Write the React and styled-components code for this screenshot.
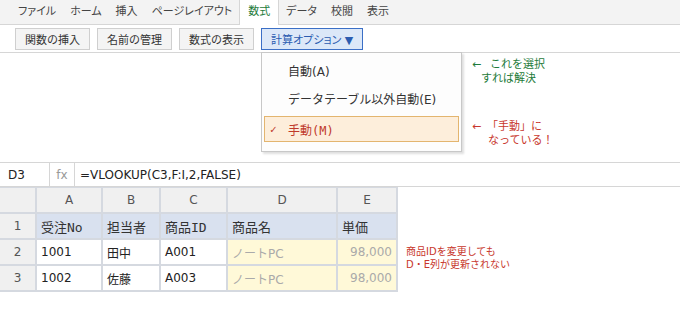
import React from 'react'
import styled, { createGlobalStyle, css } from 'styled-components'

const GlobalStyle = createGlobalStyle`
  body {
    margin: 0;
    background: #fff;
    font-family: "DejaVu Sans", "Noto Sans CJK JP", sans-serif;
  }
`

const Page = styled.div`
  width: 680px;
  height: 310px;
  overflow: hidden;
  background: #fff;
`

const TabBar = styled.div`
  display: flex;
  height: 24px;
  padding-left: 11px;
  background: #f3f3f3;
  border-bottom: 1px solid #d6d6d6;
`

const Tab = styled.div`
  padding: 0 6px;
  font-size: 11px;
  line-height: 24px;
  color: #444;
  font-feature-settings: "palt";
  border: solid transparent;
  border-width: 0 1px;
  ${p =>
    p.$active &&
    css`
      height: 25px;
      padding: 0 8px;
      background: #fff;
      border-color: #d6d6d6;
      color: #1e7b3a;
    `}
`

const Toolbar = styled.div`
  display: flex;
  gap: 7px;
  padding: 3px 15px 2px;
  border-bottom: 1px solid #d6d6d6;
`

const ToolButton = styled.button`
  height: 22px;
  box-sizing: border-box;
  padding: 0 9px;
  font-family: inherit;
  font-size: 11px;
  color: #333;
  background: #f4f4f4;
  border: 1px solid #cfcfcf;
  ${p =>
    p.$primary &&
    css`
      padding: 0 9px;
      font-feature-settings: "palt";
      color: #2b5cb0;
      background: #dce8f8;
      border-color: #3b6fc6;
    `}
`

const MenuArea = styled.div`
  display: flex;
  align-items: flex-start;
  height: 109px;
  padding-left: 261px;
`

const Menu = styled.div`
  position: relative;
  z-index: 1;
  width: 201px;
  box-sizing: border-box;
  margin-top: -1px;
  padding: 3px 2px 9px;
  background: #fdfdfd;
  border: 1px solid #c8c8c8;
  box-shadow: 2px 2px 2px rgba(0, 0, 0, 0.13);
`

const MenuItem = styled.div`
  display: flex;
  align-items: center;
  height: 28px;
  box-sizing: border-box;
  padding-left: 5px;
  border: 1px solid transparent;
  font-size: 12px;
  color: #333;
  ${p =>
    p.$selected &&
    css`
      height: 26px;
      margin-top: 4px;
      background: #fdeedb;
      border-color: #e3b56f;
      color: #c0392b;
      font-family: "DejaVu Sans Mono", "Noto Sans CJK JP", monospace;
    `}
`

const Check = styled.span`
  width: 18px;
  font-size: 11px;
  color: #c0392b;
`

const Notes = styled.div`
  display: flex;
  flex-direction: column;
  margin-left: 10px;
`

const Note = styled.div`
  margin-top: ${p => p.$top}px;
  font-size: ${p => p.$size || 11}px;
  line-height: ${p => p.$line || 14}px;
  color: ${p => (p.$tone === 'green' ? '#1e7b3a' : '#c8372d')};
`

const Arrow = styled.span`
  display: inline-block;
  width: ${p => p.$w}px;
`

const Indent = styled.div`
  padding-left: ${p => p.$w}px;
`

const FormulaBar = styled.div`
  display: flex;
  height: 23px;
  border-top: 1px solid #d6d6d6;
  border-bottom: 1px solid #d6d6d6;
  font-size: 12px;
  color: #222;
`

const NameBox = styled.div`
  display: flex;
  align-items: center;
  width: 50px;
  box-sizing: border-box;
  padding-left: 8px;
  border-right: 1px solid #d6d6d6;
`

const FxBox = styled.div`
  display: flex;
  align-items: center;
  justify-content: center;
  width: 25px;
  box-sizing: border-box;
  border-right: 1px solid #d6d6d6;
  color: #999;
`

const Formula = styled.div`
  display: flex;
  align-items: center;
  padding-left: 5px;
`

const SheetRow = styled.div`
  display: flex;
  align-items: flex-start;
  gap: 8px;
`

const Grid = styled.div`
  display: grid;
  grid-template-columns: 35px 64px 56px 65px 108px 58px;
  grid-auto-rows: 24px;
  gap: 2px;
  padding: 1px 2px 2px 0;
  background: #d5d9e0;
`

const cellKinds = {
  head: css`
    justify-content: center;
    background: #f0f0f0;
    color: #555;
  `,
  field: css`
    background: #d9e1ef;
    color: #333;
    font-family: "DejaVu Sans Mono", "Noto Sans CJK JP", monospace;
    font-size: 13px;
  `,
  lookup: css`
    background: #fff9d8;
    color: #aaa;
  `,
  value: css`
    background: #fff;
    color: #222;
  `,
}

const Cell = styled.div`
  display: flex;
  align-items: center;
  padding: 0 4px;
  font-size: 12px;
  ${p => cellKinds[p.$kind || 'value']}
  ${p => p.$right && 'justify-content: flex-end;'}
`

const tabs = ['ファイル', 'ホーム', '挿入', 'ページレイアウト', '数式', 'データ', '校閲', '表示']
const tools = ['関数の挿入', '名前の管理', '数式の表示']
const columns = ['', 'A', 'B', 'C', 'D', 'E']
const fields = ['受注No', '担当者', '商品ID', '商品名', '単価']
const rows = [
  ['1001', '田中', 'A001'],
  ['1002', '佐藤', 'A003'],
]

export default function App() {
  return (
    <Page>
      <GlobalStyle />
      <TabBar>
        {tabs.map(t => (
          <Tab key={t} $active={t === '数式'}>
            {t}
          </Tab>
        ))}
      </TabBar>

      <Toolbar>
        {tools.map(t => (
          <ToolButton key={t}>{t}</ToolButton>
        ))}
        <ToolButton $primary>計算オプション ▼</ToolButton>
      </Toolbar>

      <MenuArea>
        <Menu>
          <MenuItem>
            <Check />
            自動(A)
          </MenuItem>
          <MenuItem>
            <Check />
            データテーブル以外自動(E)
          </MenuItem>
          <MenuItem $selected>
            <Check>✓</Check>
            手動(M)
          </MenuItem>
        </Menu>
        <Notes>
          <Note $tone="green" $top={5}>
            <div>
              <Arrow $w={18}>←</Arrow>これを選択
            </div>
            <Indent $w={9}>すれば解決</Indent>
          </Note>
          <Note $tone="red" $top={34}>
            <div>
              <Arrow $w={15}>←</Arrow>「手動」に
            </div>
            <Indent $w={16}>なっている！</Indent>
          </Note>
        </Notes>
      </MenuArea>

      <FormulaBar>
        <NameBox>D3</NameBox>
        <FxBox>fx</FxBox>
        <Formula>=VLOOKUP(C3,F:I,2,FALSE)</Formula>
      </FormulaBar>

      <SheetRow>
        <Grid>
          {columns.map((c, i) => (
            <Cell key={'h' + i} $kind="head">
              {c}
            </Cell>
          ))}
          <Cell $kind="head">1</Cell>
          {fields.map(f => (
            <Cell key={f} $kind="field">
              {f}
            </Cell>
          ))}
          {rows.map((r, i) => (
            <React.Fragment key={r[0]}>
              <Cell $kind="head">{i + 2}</Cell>
              {r.map((v, j) => (
                <Cell key={j}>{v}</Cell>
              ))}
              <Cell $kind="lookup">ノートPC</Cell>
              <Cell $kind="lookup" $right>
                98,000
              </Cell>
            </React.Fragment>
          ))}
        </Grid>
        <Note $tone="red" $top={58} $size={10} $line={13}>
          <div>商品IDを変更しても</div>
          <div>D・E列が更新されない</div>
        </Note>
      </SheetRow>
    </Page>
  )
}
